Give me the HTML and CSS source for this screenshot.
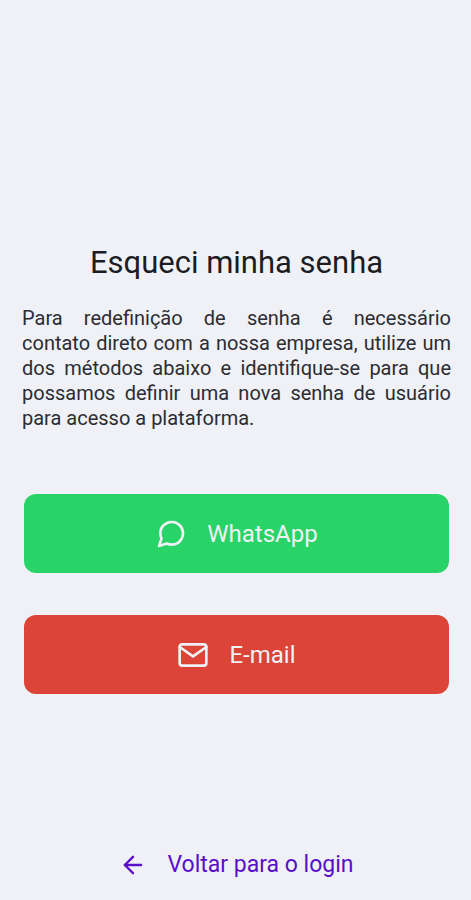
FILE: index.html
```html
<!DOCTYPE html>
<html lang="pt-BR">
<head>
  <meta charset="UTF-8">
  <meta name="viewport" content="width=device-width, initial-scale=1">
  <title>Esqueci minha senha</title>
  <link rel="stylesheet" href="styles.css">
</head>
<body>
  <main class="conteudo">
    <h1 class="titulo">Esqueci minha senha</h1>
    <p class="texto">Para redefinição de senha é necessário contato&nbsp;direto com a nossa empresa, utilize um dos métodos abaixo e identifique-se para que possamos definir uma nova senha de usuário para acesso a plataforma.</p>

    <div class="botoes">
      <button type="button" class="btn btn-whatsapp">
        <svg class="icone" viewBox="0 0 24 24" aria-hidden="true">
          <path d="M21 11.5a8.38 8.38 0 0 1-.9 3.8 8.5 8.5 0 0 1-7.6 4.7 8.38 8.38 0 0 1-3.8-.9L3 21l1.9-5.7a8.38 8.38 0 0 1-.9-3.8 8.5 8.5 0 0 1 4.7-7.6 8.38 8.38 0 0 1 3.8-.9h.5a8.48 8.48 0 0 1 8 8v.5z"/>
        </svg>
        WhatsApp
      </button>
      <button type="button" class="btn btn-email">
        <svg class="icone" viewBox="0 0 24 24" aria-hidden="true">
          <path d="M4 4h16c1.1 0 2 .9 2 2v12c0 1.1-.9 2-2 2H4c-1.1 0-2-.9-2-2V6c0-1.1.9-2 2-2z"/>
          <path d="M22 6l-10 7L2 6"/>
        </svg>
        E-mail
      </button>
    </div>
  </main>

  <footer class="rodape">
    <a href="/login" class="link-voltar">
      <svg class="icone icone-seta" viewBox="0 0 24 24" aria-hidden="true">
        <path d="M19 12H5"/>
        <path d="M12 19l-7-7 7-7"/>
      </svg>
      Voltar para o login
    </a>
  </footer>
</body>
</html>
```

FILE: styles.css
```css
* {
  box-sizing: border-box;
}
body {
  display: flex;
  flex-direction: column;
  min-height: 100vh;
  margin: 0;
  padding: 91px 20px 16px 22px;
  font-family: Roboto, sans-serif;
  background: #eff1f6;
  color: #1c1c22;
}
.conteudo {
  display: flex;
  flex: 1;
  flex-direction: column;
  justify-content: center;
}
.titulo {
  margin: 0 0 24px;
  font-size: 31px;
  font-weight: 400;
  line-height: 38px;
  text-align: center;
}
.texto {
  margin: 0 0 63px;
  font-size: 20px;
  line-height: 25px;
  text-align: justify;
  color: #2c2c33;
}
.botoes {
  display: flex;
  flex-direction: column;
  gap: 42px;
  padding: 0 2px;
}
.btn {
  display: flex;
  align-items: center;
  justify-content: center;
  gap: 20px;
  height: 79px;
  padding: 2px 0 0;
  border: none;
  border-radius: 12px;
  font-family: inherit;
  font-size: 24px;
  color: #eff1f6;
  cursor: pointer;
}
.btn-whatsapp {
  background: #28d467;
}
.btn-email {
  background: #db4437;
}
.icone {
  width: 32px;
  height: 32px;
  fill: none;
  stroke: currentColor;
  stroke-width: 2;
  stroke-linecap: round;
  stroke-linejoin: round;
}
.icone-seta {
  width: 28px;
  height: 28px;
}
.rodape {
  display: flex;
  justify-content: center;
}
.link-voltar {
  display: flex;
  align-items: center;
  gap: 20px;
  font-size: 23px;
  line-height: 38px;
  color: #5a0fc8;
  text-decoration: none;
}
```
